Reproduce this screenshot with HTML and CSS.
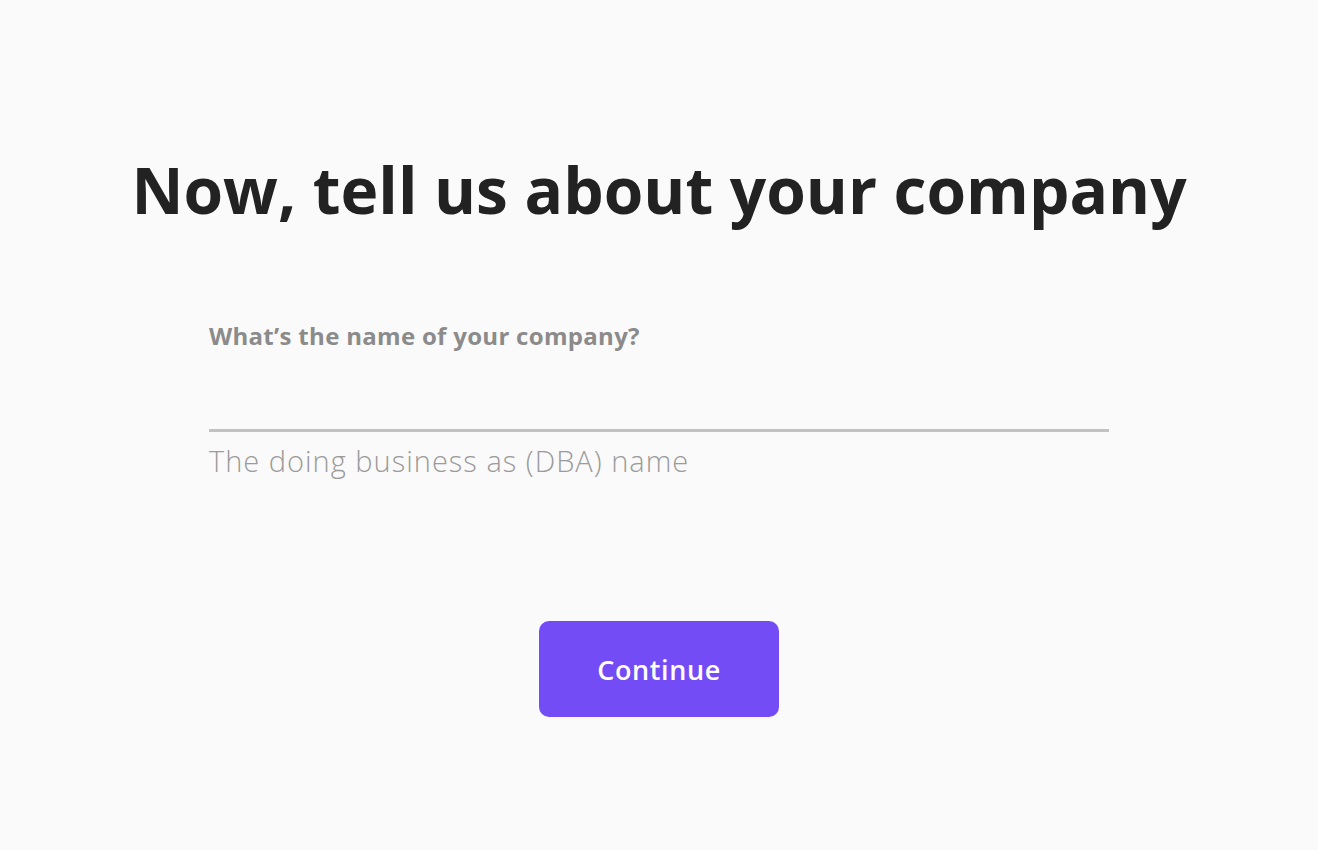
FILE: index.html
```html
<!DOCTYPE html>
<html lang="en">
<head>
  <meta charset="UTF-8">
  <title>Company details</title>
  <link rel="stylesheet" href="styles.css">
</head>
<body>

  <div class="page">
    <h1 class="title">Now, tell us about your company</h1>

    <form class="company-form" onsubmit="return false">
      <label class="field-label" for="company-name">What’s the name of your company?</label>
      <input class="field-input" id="company-name" type="text">
      <p class="field-hint">The doing business as (DBA) name</p>

      <div class="actions">
        <button type="submit" class="btn-continue">Continue</button>
      </div>
    </form>
  </div>

</body>
</html>
```

FILE: styles.css
```css
body {
  font-family: 'Open Sans', 'Noto Sans', sans-serif;
  margin: 0;
  padding: 0;
  background-color: #fafafa;
  color: #222;
}

.page {
  height: 850px;
  padding-top: 150px;
  box-sizing: border-box;
}

.title {
  margin: 0;
  font-size: 64px;
  font-weight: 700;
  line-height: 80px;
  text-align: center;
  color: #222223;
}

.company-form {
  width: 900px;
  margin: 0 auto;
  padding-top: 91px;
}

.field-label {
  display: block;
  font-size: 24px;
  line-height: 30px;
  font-weight: 700;
  letter-spacing: 0.3px;
  color: #8b8b8b;
}

.field-input {
  display: block;
  box-sizing: border-box;
  width: 100%;
  height: 63px;
  margin-top: 18px;
  padding: 0;
  border: none;
  border-bottom: 3px solid #c2c2c2;
  background: transparent;
  font: inherit;
  font-size: 28px;
  outline: none;
}

.field-hint {
  margin: 11px 0 0;
  font-size: 29px;
  line-height: 36px;
  font-weight: 300;
  letter-spacing: 1px;
  color: #9b9b9b;
}

.actions {
  display: flex;
  justify-content: center;
  margin-top: 142px;
}

.btn-continue {
  width: 240px;
  height: 96px;
  background-color: #744cf6;
  color: #fff;
  border: none;
  border-radius: 10px;
  font-family: inherit;
  font-size: 27px;
  font-weight: 600;
  letter-spacing: 0.6px;
  cursor: pointer;
}
```
